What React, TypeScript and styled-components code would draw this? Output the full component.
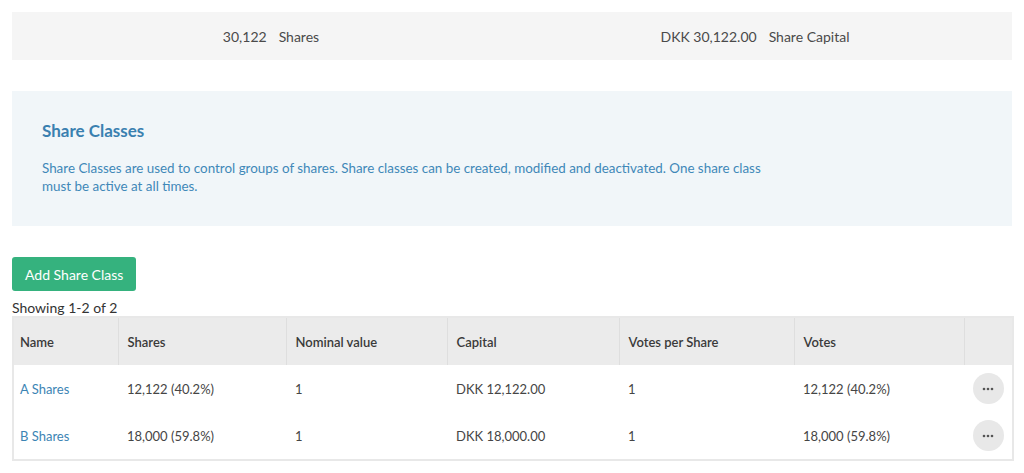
import React from "react";
import styled, { createGlobalStyle } from "styled-components";

const GlobalStyle = createGlobalStyle`
  html, body {
    margin: 0;
    padding: 0;
    background: #fff;
  }
  body {
    font-family: Lato, "Open Sans", sans-serif;
    color: #444;
  }
`;

const Page = styled.div`
  padding: 12px 12px 0 12px;
  width: 1000px;
`;

const StatsBar = styled.div`
  display: grid;
  grid-template-columns: 1fr 1fr;
  height: 48px;
  background: #f5f5f5;
  align-items: center;
`;

const Stat = styled.div<{ $shift: number }>`
  display: flex;
  justify-content: center;
  gap: 12px;
  font-size: 14px;
  color: #4a4a4a;
  margin-left: ${(p) => p.$shift}px;
`;

const InfoBox = styled.section`
  margin-top: 31px;
  height: 135px;
  box-sizing: border-box;
  background: #f1f6f9;
  padding: 30px 30px 0 30px;
  color: #3f88b8;
`;

const InfoTitle = styled.h2`
  margin: 0;
  font-size: 17px;
  font-weight: 700;
  color: #3a80b0;
  line-height: 20px;
`;

const InfoText = styled.p`
  margin: 18px 0 0 0;
  font-size: 13.4px;
  line-height: 18px;
  max-width: 740px;
`;

const AddButton = styled.button`
  margin-top: 31px;
  height: 34px;
  padding: 0 13px;
  border: none;
  border-radius: 3px;
  background: #35b27e;
  color: #fff;
  font-family: Lato, sans-serif;
  font-size: 14px;
  cursor: pointer;
`;

const Showing = styled.div`
  margin-top: 8px;
  font-size: 14px;
  color: #333;
  line-height: 17px;
`;

const Table = styled.table`
  width: 1000px;
  table-layout: fixed;
  border-collapse: collapse;
  border: 2px solid #e8e8e8;
  font-size: 13px;
`;

const Th = styled.th<{ $w: number }>`
  width: ${(p) => p.$w}px;
  height: 48px;
  box-sizing: border-box;
  background: #ebebeb;
  border-right: 1px solid #dedede;
  text-align: left;
  padding: 0 9px;
  font-weight: 600;
  color: #3a3a3a;
  &:first-child {
    padding-left: 6px;
  }
  &:last-child {
    border-right: none;
  }
`;

const Td = styled.td`
  height: 47px;
  padding: 0 9px;
  color: #454545;
  &:first-child {
    padding-left: 6px;
  }
`;

const NameLink = styled.a`
  color: #3c84b4;
  text-decoration: none;
`;

const ActionCell = styled.td`
  text-align: center;
  padding: 0;
`;

const DotsButton = styled.button`
  width: 31px;
  height: 31px;
  border-radius: 50%;
  border: none;
  background: #e8e8e8;
  display: inline-flex;
  align-items: center;
  justify-content: center;
  padding: 0;
  cursor: pointer;
`;

const cols = [
  { label: "Name", w: 105 },
  { label: "Shares", w: 168 },
  { label: "Nominal value", w: 161 },
  { label: "Capital", w: 172 },
  { label: "Votes per Share", w: 175 },
  { label: "Votes", w: 170 },
  { label: "", w: 49 },
];

const rows = [
  { name: "A Shares", shares: "12,122 (40.2%)", nominal: "1", capital: "DKK 12,122.00", vps: "1", votes: "12,122 (40.2%)" },
  { name: "B Shares", shares: "18,000 (59.8%)", nominal: "1", capital: "DKK 18,000.00", vps: "1", votes: "18,000 (59.8%)" },
];

function Dots() {
  return (
    <svg width="12" height="4" viewBox="0 0 12 4">
      <circle cx="2" cy="2" r="1.3" fill="#555" />
      <circle cx="6" cy="2" r="1.3" fill="#555" />
      <circle cx="10" cy="2" r="1.3" fill="#555" />
    </svg>
  );
}

export default function App() {
  return (
    <>
      <GlobalStyle />
      <Page>
        <StatsBar>
          <Stat $shift={18}>
            <span>30,122</span>
            <span>Shares</span>
          </Stat>
          <Stat $shift={-14}>
            <span>DKK 30,122.00</span>
            <span>Share Capital</span>
          </Stat>
        </StatsBar>

        <InfoBox>
          <InfoTitle>Share Classes</InfoTitle>
          <InfoText>
            Share Classes are used to control groups of shares. Share classes can be created, modified and
            deactivated. One share class must be active at all times.
          </InfoText>
        </InfoBox>

        <AddButton>Add Share Class</AddButton>
        <Showing>Showing 1-2 of 2</Showing>

        <Table>
          <thead>
            <tr>
              {cols.map((c, i) => (
                <Th key={i} $w={c.w}>
                  {c.label}
                </Th>
              ))}
            </tr>
          </thead>
          <tbody>
            {rows.map((r) => (
              <tr key={r.name}>
                <Td>
                  <NameLink href="#">{r.name}</NameLink>
                </Td>
                <Td>{r.shares}</Td>
                <Td>{r.nominal}</Td>
                <Td>{r.capital}</Td>
                <Td>{r.vps}</Td>
                <Td>{r.votes}</Td>
                <ActionCell>
                  <DotsButton aria-label="More">
                    <Dots />
                  </DotsButton>
                </ActionCell>
              </tr>
            ))}
          </tbody>
        </Table>
      </Page>
    </>
  );
}
